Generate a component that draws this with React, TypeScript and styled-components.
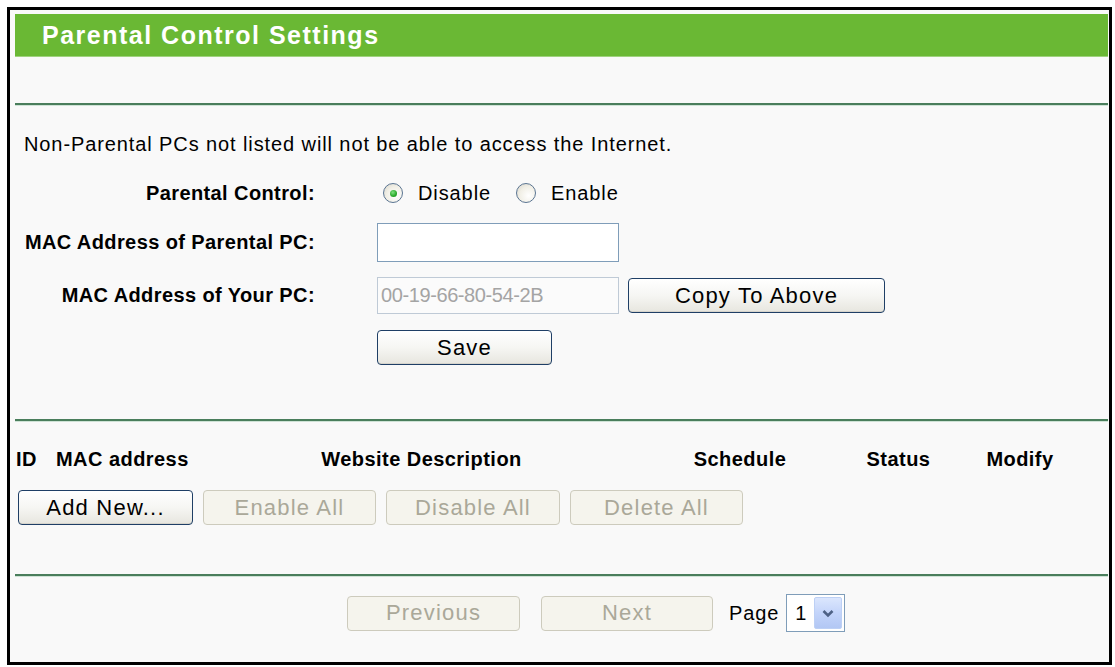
import styled, { createGlobalStyle } from "styled-components"

const GlobalStyle = createGlobalStyle`
  html, body {
    margin: 0;
    padding: 0;
    background: #ffffff;
  }
  body {
    font-family: "Liberation Sans", Arial, sans-serif;
    color: #000;
  }
`

const App = () => {
  return (
    <>
      <GlobalStyle />
      <Frame>
        <TitleBar>Parental Control Settings</TitleBar>
        <Blank />
        <Divider />

        <Desc>Non-Parental PCs not listed will not be able to access the Internet.</Desc>

        <FormRow $top={25} $h={24}>
          <Label>Parental Control:</Label>
          <RadioGroup>
            <RadioOption>
              <Radio $checked />
              <span>Disable</span>
            </RadioOption>
            <RadioOption>
              <Radio />
              <span>Enable</span>
            </RadioOption>
          </RadioGroup>
        </FormRow>

        <FormRow $top={18} $h={39}>
          <Label>MAC Address of Parental PC:</Label>
          <Controls>
            <TextInput type="text" defaultValue="" />
          </Controls>
        </FormRow>

        <FormRow $top={15} $h={37}>
          <Label>MAC Address of Your PC:</Label>
          <Controls>
            <TextInput type="text" value="00-19-66-80-54-2B" disabled readOnly />
            <Button $w={257}>Copy To Above</Button>
          </Controls>
        </FormRow>

        <FormRow $top={16} $h={34}>
          <span />
          <Controls>
            <Button $w={175}>Save</Button>
          </Controls>
        </FormRow>

        <Divider $top={55} />

        <TableHead>
          <HeadCell>ID</HeadCell>
          <HeadCell $pad={6}>MAC address</HeadCell>
          <HeadCell $center>Website Description</HeadCell>
          <HeadCell $center>Schedule</HeadCell>
          <HeadCell $center>Status</HeadCell>
          <HeadCell $center>Modify</HeadCell>
        </TableHead>

        <ButtonRow>
          <Button $w={175}>Add New...</Button>
          <Button $w={173} disabled>Enable All</Button>
          <Button $w={174} disabled>Disable All</Button>
          <Button $w={173} disabled>Delete All</Button>
        </ButtonRow>

        <Divider $top={49} />

        <Pager>
          <Button $w={173} disabled>Previous</Button>
          <Button $w={172} disabled>Next</Button>
          <PageText>Page</PageText>
          <PageSelect>
            <span>1</span>
            <ArrowBox>
              <svg width="12" height="9" viewBox="0 0 12 9">
                <path d="M1.5 2 L6 6.5 L10.5 2" fill="none" stroke="#4d6185" strokeWidth="2.6" />
              </svg>
            </ArrowBox>
          </PageSelect>
        </Pager>
      </Frame>
    </>
  )
}

export default App

const Frame = styled.div`
  box-sizing: border-box;
  width: 1105px;
  height: 658px;
  margin: 7px 0 0 7px;
  border: 3px solid #000;
  padding: 4px 1px 0 5px;
  background: #f9f9f9;
  display: flex;
  flex-direction: column;
`
const TitleBar = styled.div`
  flex-shrink: 0;
  height: 43px;
  box-sizing: border-box;
  background: #6ab834;
  border-bottom: 1px solid #9fd27e;
  display: flex;
  align-items: center;
  padding-left: 27px;
  color: #fff;
  font-size: 25px;
  font-weight: bold;
  letter-spacing: 1.5px;
`
const Blank = styled.div`
  flex-shrink: 0;
  height: 46px;
`
const Divider = styled.div<{ $top?: number }>`
  flex-shrink: 0;
  height: 2px;
  margin-top: ${(p) => p.$top || 0}px;
  background: #4a7e5c;
  border-bottom: 1px solid #cfe3d6;
`
const Desc = styled.div`
  margin-top: 26px;
  padding-left: 9px;
  line-height: 24px;
  font-size: 20px;
  letter-spacing: 0.9px;
`
const FormRow = styled.div<{ $top: number; $h: number }>`
  display: grid;
  grid-template-columns: 300px 1fr;
  column-gap: 62px;
  align-items: center;
  margin-top: ${(p) => p.$top}px;
  height: ${(p) => p.$h}px;
`
const Label = styled.div`
  text-align: right;
  font-size: 20px;
  font-weight: bold;
  letter-spacing: 0.4px;
`
const Controls = styled.div`
  display: flex;
  align-items: center;
  gap: 9px;
`
const RadioGroup = styled.div`
  display: flex;
  align-items: center;
  gap: 25px;
  padding-left: 6px;
  font-size: 20px;
  letter-spacing: 0.9px;
`
const RadioOption = styled.label`
  display: flex;
  align-items: center;
  gap: 15px;
`
const Radio = styled.span<{ $checked?: boolean }>`
  box-sizing: border-box;
  width: 20px;
  height: 20px;
  border-radius: 50%;
  border: 1px solid #5b7592;
  background: radial-gradient(circle at 65% 65%, #ffffff 0%, #f1efe6 55%, #d4d2c8 100%);
  display: flex;
  align-items: center;
  justify-content: center;
  &::after {
    content: "";
    display: ${(p) => (p.$checked ? "block" : "none")};
    width: 7px;
    height: 7px;
    border-radius: 50%;
    background: radial-gradient(circle at 40% 35%, #7fe07f 0%, #28a828 60%, #1b8a1b 100%);
  }
`
const TextInput = styled.input`
  box-sizing: border-box;
  width: 242px;
  height: 39px;
  margin: 0;
  padding: 0 3px;
  border: 1px solid #7f9db9;
  background: #ffffff;
  font-family: "Liberation Sans", Arial, sans-serif;
  font-size: 20px;
  letter-spacing: -0.4px;
  color: #000;
  outline: none;
  &:disabled {
    height: 37px;
    border-color: #bfcad6;
    background: #fbfbfb;
    color: #a4a4a4;
  }
`
const Button = styled.button<{ $w: number }>`
  box-sizing: border-box;
  width: ${(p) => p.$w}px;
  height: 35px;
  margin: 0;
  padding: 0;
  border: 1px solid #1f3f66;
  border-radius: 4px;
  background: linear-gradient(#ffffff 0%, #f6f6f3 50%, #e7e6df 100%);
  box-shadow: inset 0 -1px 0 #d6d4cc;
  font-family: "Liberation Sans", Arial, sans-serif;
  font-size: 22px;
  letter-spacing: 1.2px;
  color: #000;
  &:disabled {
    border-color: #cdcbbd;
    background: #f5f4ed;
    box-shadow: none;
    color: #aaa899;
  }
`
const TableHead = styled.div`
  display: grid;
  grid-template-columns: 35px 150px 442px 195px 122px 121px;
  margin-top: 25px;
  height: 24px;
  align-items: center;
  font-size: 20px;
  font-weight: bold;
  letter-spacing: 0.45px;
`
const HeadCell = styled.div<{ $center?: boolean; $pad?: number }>`
  text-align: ${(p) => (p.$center ? "center" : "left")};
  padding-left: ${(p) => p.$pad || 1}px;
  white-space: nowrap;
`
const ButtonRow = styled.div`
  display: flex;
  gap: 10px;
  margin-top: 19px;
  padding-left: 3px;
`
const Pager = styled.div`
  display: flex;
  align-items: center;
  margin-top: 17px;
  height: 38px;
  padding-left: 332px;
  gap: 21px;
  & > :nth-child(3) {
    margin-left: -5px;
  }
  & > :nth-child(4) {
    margin-left: -14px;
  }
`
const PageText = styled.span`
  font-size: 20px;
  letter-spacing: 0.9px;
`
const PageSelect = styled.div`
  box-sizing: border-box;
  width: 59px;
  height: 38px;
  border: 1px solid #7f9db9;
  background: #fff;
  display: flex;
  align-items: center;
  justify-content: space-between;
  padding: 2px 2px 2px 8px;
  font-size: 20px;
`
const ArrowBox = styled.div`
  box-sizing: border-box;
  width: 28px;
  height: 100%;
  border: 1px solid #bdd0f5;
  border-radius: 2px;
  background: linear-gradient(#dbe6fd 0%, #c3d4fa 50%, #b2c7f4 100%);
  display: flex;
  align-items: center;
  justify-content: center;
`
